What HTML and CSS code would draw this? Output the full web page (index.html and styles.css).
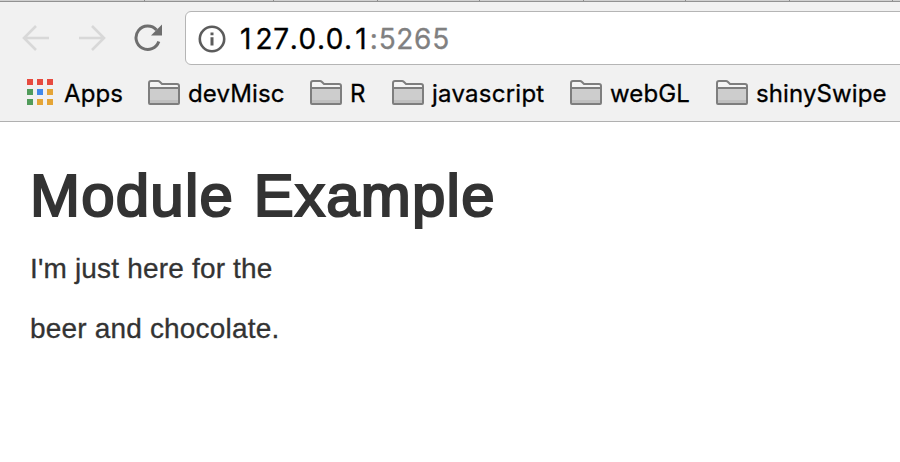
FILE: index.html
```html
<!DOCTYPE html>
<html lang="en">
<head>
<meta charset="utf-8">
<title>Module Example</title>
<link rel="stylesheet" href="styles.css">
</head>
<body>
<svg class="symbols" aria-hidden="true">
  <symbol id="folder" viewBox="0 0 32 26">
    <path d="M1 23V3Q1 1 3 1H10Q11 1 12 2L14 4H29Q31 4 31 6V23Q31 24 30 24H2Q1 24 1 23Z" fill="#f4f4f4"/>
    <path d="M1 8H31V24H1Z" fill="#cdcdcd"/>
    <path d="M2 21.5H30" stroke="#bfbfbf" stroke-width="3"/>
    <path d="M1 8H31M1 23V3Q1 1 3 1H10Q11 1 12 2L14 4H29Q31 4 31 6V23Q31 24 30 24H2Q1 24 1 23Z" fill="none" stroke="#7e7e7e" stroke-width="2"/>
  </symbol>
</svg>
<header class="browser">
  <div class="tabs"><i></i><i></i><i></i><i></i><i></i><i></i><i></i><i></i></div>
  <div class="toolbar">
    <svg class="nav" viewBox="0 0 28 28"><path d="M27 14H2M14 2L2 14L14 26" fill="none" stroke="#d8d8d8" stroke-width="2.6"/></svg>
    <svg class="nav forward" viewBox="0 0 28 28"><path d="M1 14H26M14 2L26 14L14 26" fill="none" stroke="#d8d8d8" stroke-width="2.6"/></svg>
    <svg class="nav reload" viewBox="0 0 28 28"><path d="M24.8 17.5A11.7 11.7 0 1 1 22.5 6" fill="none" stroke="#6e6e6e" stroke-width="3"/><path d="M28 0.5V11.5H17Z" fill="#6e6e6e"/></svg>
    <div class="address">
      <svg class="info" viewBox="0 0 28 28"><circle cx="14" cy="14" r="12.2" fill="none" stroke="#5c5c5c" stroke-width="2.6"/><path d="M12.5 7.5H15.5V10.2H12.5ZM12.5 12.3H15.5V20.5H12.5Z" fill="#5c5c5c"/></svg>
      <div class="url"><b>1</b>27.0.0.<b>1</b><span>:5265</span></div>
    </div>
  </div>
  <nav class="bookmarks">
    <div class="mark apps"><svg class="grid" viewBox="0 0 26 26"><path d="M0 0h6v6H0zM10 0h6v6h-6zM20 0h6v6h-6z" fill="#e74b3f"/><path d="M0 10h6v6H0zM0 20h6v6H0z" fill="#519c5b"/><path d="M10 10h6v6h-6z" fill="#4289eb"/><path d="M20 10h6v6h-6zM10 20h6v6h-6zM20 20h6v6h-6z" fill="#e5a537"/></svg><span>Apps</span></div>
    <div class="mark devmisc"><svg class="folder"><use href="#folder"/></svg><span>devMisc</span></div>
    <div class="mark r"><svg class="folder"><use href="#folder"/></svg><span>R</span></div>
    <div class="mark javascript"><svg class="folder"><use href="#folder"/></svg><span>javascript</span></div>
    <div class="mark webgl"><svg class="folder"><use href="#folder"/></svg><span>webGL</span></div>
    <div class="mark swipe"><svg class="folder"><use href="#folder"/></svg><span>shinySwipe</span></div>
  </nav>
</header>
<main>
  <h1>Module Example</h1>
  <p class="first">I'm just here for the</p>
  <p class="second">beer and chocolate.</p>
</main>
</body>
</html>
```
FILE: styles.css
```css
* { box-sizing: border-box; }
body { margin: 0; background: #fff; color: #333; overflow: hidden; font-family: "Liberation Sans", Arial, sans-serif; }
svg { display: block; flex: none; }
.symbols { position: absolute; width: 0; height: 0; }
.browser { height: 122px; background: #f1f1f1; border-bottom: 1px solid #b0b0b0; color: #000; font-family: Inter, sans-serif; }
.tabs { height: 2px; background: #d0d0d0; border-bottom: 1px solid #929292; display: grid; grid-template-columns: 145px 129px 104px 102px 104px 102px 104px 103px; overflow: hidden; }
.tabs i { border-right: 1px solid #8c8c8c; }
.toolbar { height: 63px; padding: 9px 0 0 22px; display: flex; }
.nav { width: 28px; height: 28px; margin-top: 13px; }
.forward { margin-left: 28px; }
.reload { margin-left: 28px; }
.address { flex: 1; margin-left: 23px; margin-right: -8px; height: 54px; border: 1px solid #b5b5b5; border-radius: 6px; background: #fff; display: flex; padding-left: 12px; }
.info { width: 28px; height: 28px; margin-top: 13px; }
.url { margin-left: 14px; font-size: 28px; line-height: 55px; letter-spacing: .7px; font-kerning: none; white-space: nowrap; -webkit-text-stroke: .3px; }
.url b { font-weight: 400; display: inline-block; width: 17px; text-align: center; }
.url b:first-child { text-align: left; width: 15.5px; }
.url span { color: #808080; }
.bookmarks { display: flex; padding-left: 27px; height: 56px; }
.mark { display: flex; flex: none; font-size: 24px; line-height: 58px; letter-spacing: .12px; white-space: nowrap; -webkit-text-stroke: .3px; }
.grid { width: 26px; height: 26px; margin: 14px 11px 0 0; }
.folder { width: 32px; height: 26px; margin: 15px 8px 0 0; }
.apps { width: 121px; }
.devmisc { width: 162px; }
.r { width: 82px; }
.javascript { width: 178px; letter-spacing: .25px; }
.webgl { width: 146px; }
main { padding: 41px 30px 0; }
h1 { margin: 0; font-size: 60px; line-height: 66px; font-weight: 400; -webkit-text-stroke: 2.2px #333; white-space: nowrap; letter-spacing: 1.2px; word-spacing: 2px; }
p { margin: 0; font-size: 28px; line-height: 40px; white-space: nowrap; letter-spacing: .18px; -webkit-text-stroke: .3px; }
.first { margin-top: 20px; }
.second { margin-top: 20px; }
```
